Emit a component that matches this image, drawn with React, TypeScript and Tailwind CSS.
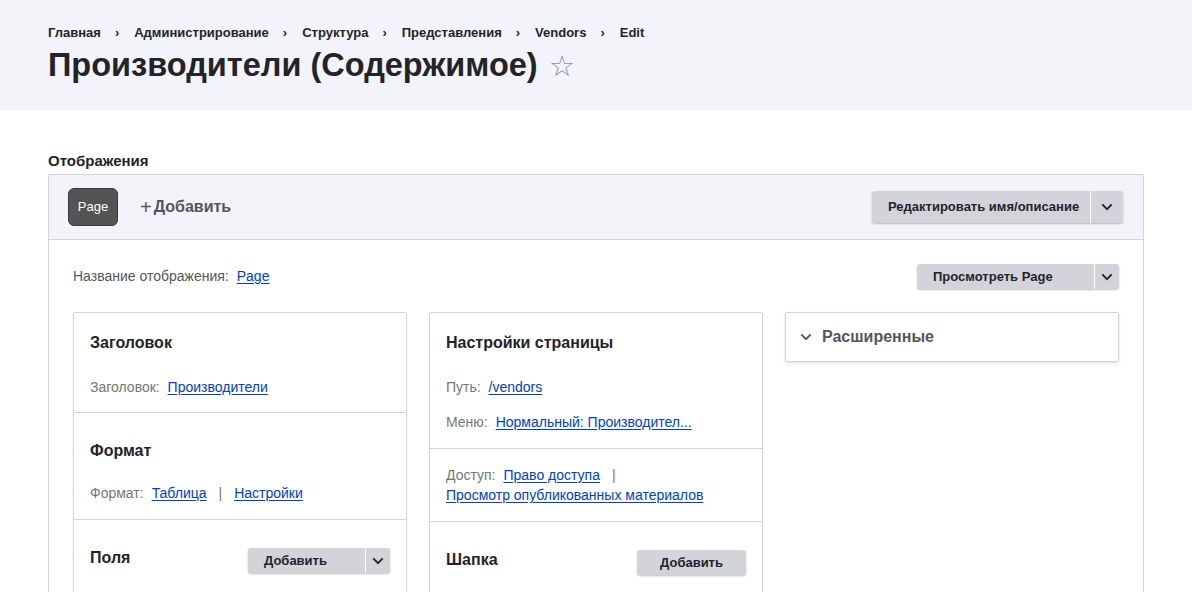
import React from 'react';

const FONT = { fontFamily: '"Liberation Sans", Arial, sans-serif' };

function Chevron({ className = '' }: { className?: string }) {
  return (
    <svg viewBox="0 0 14 9" className={className} fill="none" stroke="currentColor" strokeWidth="2.2">
      <path d="M1.5 1.5 7 7l5.5-5.5" />
    </svg>
  );
}

function SplitButton({ label, className = '', toggle = 'w-[24px]' }: { label: string; className?: string; toggle?: string }) {
  return (
    <div className={`flex rounded-[3px] bg-[#d3d4d9] shadow-[0_1px_2px_rgba(0,0,0,0.25)] ${className}`}>
      <span className="flex-1 flex items-center pl-[16px] font-bold text-[13px] text-[#222330]">{label}</span>
      <span className="w-px bg-white" />
      <span className={`${toggle} flex items-center justify-center text-[#222330]`}><Chevron className="w-[12px] h-[8px]" /></span>
    </div>
  );
}

function Link({ children }: { children: React.ReactNode }) {
  return <a className="text-[#003ecc] underline underline-offset-2 cursor-pointer">{children}</a>;
}

export default function App() {
  const crumbs = ['Главная', 'Администрирование', 'Структура', 'Представления', 'Vendors', 'Edit'];
  return (
    <div style={FONT} className="w-[1192px] h-[592px] overflow-hidden bg-white text-[#232429]">
      <div className="bg-[#f3f4f9] h-[110px] px-[48px] pt-[24px]">
        <div className="flex items-center text-[13px] font-bold h-[17px]">
          {crumbs.map((c, i) => (
            <React.Fragment key={c}>
              {i > 0 && <span className="ml-[14px] mr-[15px] text-[13px]">›</span>}
              <span>{c}</span>
            </React.Fragment>
          ))}
        </div>
        <div className="flex items-center h-[44px] mt-[2px]">
          <h1 className="text-[32.5px] font-bold">Производители (Содержимое)</h1>
          <span className="ml-[11px] text-[29px] text-[#8e929c] leading-none mt-[2px]">☆</span>
        </div>
      </div>

      <div className="px-[48px] pt-[41px]">
        <h2 className="text-[15px] font-bold leading-[19px] mb-[4px]">Отображения</h2>
        <div className="border border-[#d3d4d9] h-[440px]">
          <div className="bg-[#f3f4f9] border-b border-[#d3d4d9] h-[65px] flex items-center pl-[19px] pr-[20px]">
            <span className="w-[50px] h-[38px] rounded-[6px] bg-[#545454] border border-[#3b3c40] text-white text-[13px] flex items-center justify-center">Page</span>
            <span className="ml-[22px] text-[16px] font-bold text-[#55565b] flex items-center"><span className="text-[20px] font-normal mr-[2px] leading-none">+</span>Добавить</span>
            <SplitButton label="Редактировать имя/описание" toggle="w-[32px]" className="ml-auto w-[251px] h-[32px]" />
          </div>

          <div className="px-[24px] pt-[24px]">
            <div className="flex items-center h-[25px] text-[14px]">
              <span className="text-[#55565b]">Название отображения:</span>
              <span className="ml-[8px]"><Link>Page</Link></span>
              <SplitButton label="Просмотреть Page" className="ml-auto w-[202px] h-[25px]" />
            </div>

            <div className="grid grid-cols-3 gap-[22px] mt-[23px] text-[14px]">
              <div className="border border-[#d3d4d9] rounded-[2px] shadow-[0_1px_2px_rgba(0,0,0,0.08)] h-[300px]">
                <div className="px-[16px] pt-[18px] h-[100px] border-b border-[#d3d4d9]">
                  <div className="text-[16px] font-bold">Заголовок</div>
                  <div className="mt-[22px]"><span className="text-[#75767b]">Заголовок:</span> <span className="ml-[4px]"><Link>Производители</Link></span></div>
                </div>
                <div className="px-[16px] pt-[26px] h-[107px] border-b border-[#d3d4d9]">
                  <div className="text-[16px] font-bold">Формат</div>
                  <div className="mt-[20px] flex">
                    <span className="text-[#75767b]">Формат:</span>
                    <span className="ml-[8px]"><Link>Таблица</Link></span>
                    <span className="mx-[12px] text-[#75767b]">|</span>
                    <Link>Настройки</Link>
                  </div>
                </div>
                <div className="px-[16px] pt-[28px] flex items-start justify-between">
                  <span className="text-[16px] font-bold leading-[19px]">Поля</span>
                  <SplitButton label="Добавить" className="w-[142px] h-[25px]" />
                </div>
              </div>

              <div className="border border-[#d3d4d9] rounded-[2px] shadow-[0_1px_2px_rgba(0,0,0,0.08)] h-[300px]">
                <div className="px-[16px] pt-[18px] h-[136px] border-b border-[#d3d4d9]">
                  <div className="text-[16px] font-bold">Настройки страницы</div>
                  <div className="mt-[22px]"><span className="text-[#75767b]">Путь:</span> <span className="ml-[4px]"><Link>/vendors</Link></span></div>
                  <div className="mt-[14px]"><span className="text-[#75767b]">Меню:</span> <span className="ml-[4px]"><Link>Нормальный: Производител...</Link></span></div>
                </div>
                <div className="px-[16px] pt-[16px] h-[73px] border-b border-[#d3d4d9] leading-[20px]">
                  <div>
                    <span className="text-[#75767b]">Доступ:</span>
                    <span className="ml-[8px]"><Link>Право доступа</Link></span>
                    <span className="ml-[12px] text-[#75767b]">|</span>
                  </div>
                  <Link>Просмотр опубликованных материалов</Link>
                </div>
                <div className="px-[16px] pt-[28px] flex items-start justify-between">
                  <span className="text-[16px] font-bold leading-[19px]">Шапка</span>
                  <span className="w-[109px] h-[25px] rounded-[3px] bg-[#d3d4d9] shadow-[0_1px_2px_rgba(0,0,0,0.25)] flex items-center justify-center font-bold text-[13px] text-[#222330]">Добавить</span>
                </div>
              </div>

              <div>
                <div className="border border-[#d3d4d9] rounded-[2px] shadow-[0_1px_3px_rgba(0,0,0,0.12)] h-[50px] flex items-center px-[14px]">
                  <Chevron className="w-[12px] h-[8px] text-[#55565b]" />
                  <span className="ml-[10px] text-[16px] font-bold text-[#55565b]">Расширенные</span>
                </div>
              </div>
            </div>
          </div>
        </div>
      </div>
    </div>
  );
}
